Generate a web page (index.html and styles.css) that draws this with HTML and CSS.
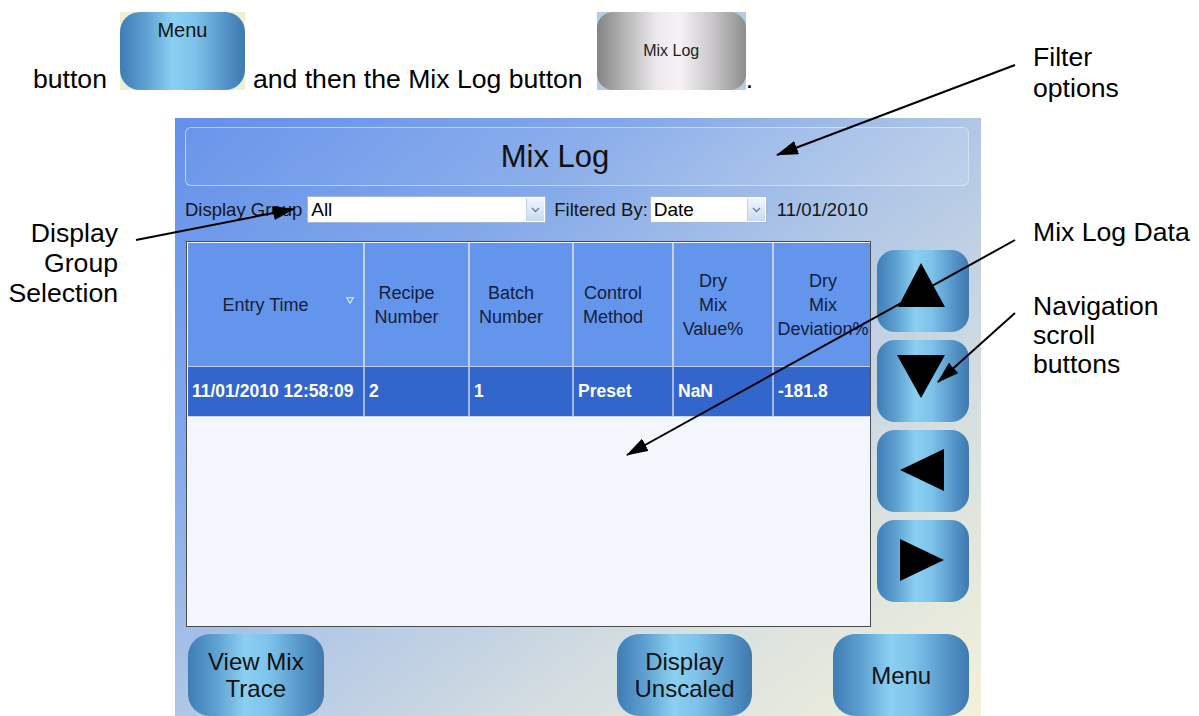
FILE: index.html
```html
<!DOCTYPE html>
<html>
<head>
<meta charset="utf-8">
<title>Mix Log</title>
<link rel="stylesheet" href="styles.css">
</head>
<body>
<div class="page">
  <p class="intro">
    <span class="txt">button</span>
    <span class="shot shot-menu"><span class="shot-menu-btn">Menu</span></span>
    <span class="txt txt-mid">and then the Mix Log button</span>
    <span class="shot shot-mixlog"><span class="shot-mixlog-btn">Mix Log</span></span>
    <span class="txt">.</span>
  </p>

  <div class="note note-left">Display<br>Group<br>Selection</div>

  <section class="panel">
    <div class="title">Mix Log</div>

    <div class="filters">
      <span class="label">Display Group</span>
      <div class="select select-group">
        <span class="value">All</span>
        <span class="drop"><svg width="9" height="6" viewBox="0 0 9 6"><path d="M1 1 L4.5 4.5 L8 1" fill="none" stroke="#6a7fa6" stroke-width="1.4"/></svg></span>
      </div>
      <span class="label label-filter">Filtered By:</span>
      <div class="select select-date">
        <span class="value">Date</span>
        <span class="drop"><svg width="9" height="6" viewBox="0 0 9 6"><path d="M1 1 L4.5 4.5 L8 1" fill="none" stroke="#6a7fa6" stroke-width="1.4"/></svg></span>
      </div>
      <span class="date">11/01/2010</span>
    </div>

    <div class="main">
      <div class="grid">
        <div class="row head">
          <div class="cell">Entry Time<svg class="sort" width="8" height="7" viewBox="0 0 8 7"><path d="M0.8 0.8 L7.2 0.8 L4 6.2 Z" fill="none" stroke="#e4ebf7" stroke-width="1.1"/></svg></div>
          <div class="cell">Recipe<br>Number</div>
          <div class="cell">Batch<br>Number</div>
          <div class="cell">Control<br>Method</div>
          <div class="cell">Dry<br>Mix<br>Value%</div>
          <div class="cell">Dry<br>Mix<br>Deviation%</div>
        </div>
        <div class="row data">
          <div class="cell">11/01/2010 12:58:09</div>
          <div class="cell">2</div>
          <div class="cell">1</div>
          <div class="cell">Preset</div>
          <div class="cell">NaN</div>
          <div class="cell">-181.8</div>
        </div>
      </div>

      <div class="nav">
        <div class="btn nav-btn"><svg width="92" height="82" viewBox="0 0 92 82"><polygon points="44,13 68,57 21,57"/></svg></div>
        <div class="btn nav-btn"><svg width="92" height="82" viewBox="0 0 92 82"><polygon points="20,15 68,15 44,58"/></svg></div>
        <div class="btn nav-btn"><svg width="92" height="82" viewBox="0 0 92 82"><polygon points="67,19 67,61 23,40"/></svg></div>
        <div class="btn nav-btn"><svg width="92" height="82" viewBox="0 0 92 82"><polygon points="23,19 23,61 67,40"/></svg></div>
      </div>
    </div>

    <div class="bottom">
      <div class="btn bbtn bbtn-trace">View Mix<br>Trace</div>
      <div class="btn bbtn bbtn-unscaled">Display<br>Unscaled</div>
      <div class="btn bbtn bbtn-menu">Menu</div>
    </div>
  </section>

  <div class="notes-right">
    <div class="note note-filter">Filter<br>options</div>
    <div class="note note-data">Mix Log Data</div>
    <div class="note note-nav">Navigation<br>scroll<br>buttons</div>
  </div>

  <svg class="arrows" width="1199" height="716" viewBox="0 0 1199 716">
    <defs>
      <marker id="ah" viewBox="0 0 22 14" refX="21" refY="7" markerWidth="22" markerHeight="14" markerUnits="userSpaceOnUse" orient="auto">
        <path d="M0 0 L22 7 L0 14 Z" fill="#000"/>
      </marker>
    </defs>
    <line x1="1015" y1="65" x2="777" y2="155" marker-end="url(#ah)"/>
    <line x1="136" y1="240" x2="294" y2="209" marker-end="url(#ah)"/>
    <line x1="1015" y1="240" x2="627" y2="455" marker-end="url(#ah)"/>
    <line x1="1015" y1="313" x2="938" y2="382" marker-end="url(#ah)"/>
  </svg>
</div>
</body>
</html>
```

FILE: styles.css
```css
* { box-sizing: border-box; }

html, body {
  margin: 0;
  padding: 0;
  background: #ffffff;
}

body {
  font-family: "Liberation Sans", Arial, sans-serif;
  color: #000;
}

.page {
  position: relative;
  width: 1199px;
  height: 716px;
  overflow: hidden;
  display: grid;
  grid-template-columns: 175px 806px 218px;
  grid-template-rows: 118px 598px;
}

/* ---------- intro line ---------- */
.intro {
  grid-column: 1 / 3;
  grid-row: 1;
  margin: 0;
  padding: 12px 0 0 33px;
  display: flex;
  align-items: flex-start;
}

.txt {
  margin-top: 52px;
  font-size: 26.6px;
  line-height: 30px;
  white-space: nowrap;
}

.txt-mid { margin-left: 8px; }

.shot {
  display: flex;
  width: 125px;
  height: 78px;
  flex: none;
}

.shot-menu {
  margin-left: 13px;
  background: #eeeed4;
}

.shot-menu-btn {
  flex: 1;
  border-radius: 20px;
  background: linear-gradient(to right, #3f7db5 0%, #5c9fd0 20%, #8bd0f2 42%, #7cc2ea 60%, #5292c6 85%, #4079ae 100%);
  text-align: center;
  font-size: 20px;
  line-height: 24px;
  padding-top: 6px;
  color: #111;
}

.shot-mixlog {
  margin-left: 14px;
  width: 149px;
  background: #b4cbe2;
}

.shot-mixlog-btn {
  flex: 1;
  border-radius: 16px;
  background: linear-gradient(to right, #848484 0%, #b4b4b4 18%, #ece9ec 40%, #f6f2f6 55%, #c8c6c8 78%, #8c8c8c 100%);
  display: flex;
  align-items: center;
  justify-content: center;
  font-size: 16px;
  color: #222;
}

/* ---------- annotations ---------- */
.note {
  font-size: 26.6px;
  line-height: 30px;
  white-space: nowrap;
}

.note-left {
  grid-column: 1;
  grid-row: 2;
  padding-top: 100px;
  padding-right: 57px;
  text-align: right;
}

.notes-right {
  grid-column: 3;
  grid-row: 1 / 3;
  padding-left: 52px;
}

.note-filter { margin-top: 42px; line-height: 31px; }
.note-data { margin-top: 113px; }
.note-nav { margin-top: 45px; line-height: 29px; }

.arrows {
  position: absolute;
  left: 0;
  top: 0;
  pointer-events: none;
}

.arrows line {
  stroke: #000;
  stroke-width: 2;
}

/* ---------- device panel ---------- */
.panel {
  grid-column: 2;
  grid-row: 2;
  overflow: hidden;
  padding: 9px 12px 0 10px;
  display: flex;
  flex-direction: column;
  background: linear-gradient(to bottom right, #6390ea 0%, #82a8ea 28%, #afc6e6 50%, #d4dde0 72%, #f3f1da 100%);
}

.title {
  height: 59px;
  flex: none;
  border: 1px solid rgba(232, 240, 246, 0.6);
  border-radius: 6px;
  background: linear-gradient(to right, rgba(255,255,255,0.04), rgba(255,255,255,0.12));
  display: flex;
  align-items: center;
  justify-content: center;
  padding-right: 44px;
  font-size: 31px;
  color: #111;
}

.filters {
  margin-top: 10px;
  height: 27px;
  flex: none;
  display: flex;
  align-items: center;
  font-size: 18.5px;
  color: #161616;
}

.label { margin-right: 5px; white-space: nowrap; }
.label-filter { margin-left: 8px; margin-right: 2px; }

.select {
  height: 27px;
  background: #fff;
  border: 1px solid #a6b9d8;
  display: flex;
  align-items: center;
  padding-left: 3px;
}

.select-group { width: 239px; }
.select-date { width: 117px; }

.select .value {
  flex: 1;
  font-size: 19px;
  color: #000;
}

.select .drop {
  width: 18px;
  height: 23px;
  margin-right: 1px;
  background: linear-gradient(to bottom, #f2f7ff, #c9daf3);
  border-left: 1px solid #c4d3ea;
  display: flex;
  align-items: center;
  justify-content: center;
}

.date { margin-left: 10px; }

.main {
  margin-top: 18px;
  display: flex;
  align-items: flex-start;
  flex: none;
}

.grid {
  margin-left: 1px;
  width: 685px;
  height: 386px;
  border: 1px solid #4b4b4b;
  padding: 1px;
  background: #f3f7fd;
  overflow: hidden;
}

.row {
  display: grid;
  grid-template-columns: 177px 105px 104px 100px 100px 120px;
  width: max-content;
}

.head {
  height: 124px;
  background: #6495ed;
  border-bottom: 1px solid #c3cde0;
}

.head .cell {
  position: relative;
  display: flex;
  align-items: center;
  justify-content: center;
  text-align: center;
  padding-right: 20px;
  border-right: 2px solid #c6d0e3;
  font-size: 18px;
  line-height: 24px;
  color: #14203a;
}

.sort {
  position: absolute;
  right: 9px;
  top: 54px;
}

.data {
  height: 50px;
  background: #3366cc;
  border-bottom: 1px solid #c9d5ec;
}

.data .cell {
  display: flex;
  align-items: center;
  padding-left: 4px;
  border-right: 2px solid #a2b6de;
  color: #fff;
  font-weight: bold;
  font-size: 17.5px;
  white-space: nowrap;
}

/* ---------- buttons ---------- */
.btn {
  background: linear-gradient(to right, #3f7db5 0%, #5c9fd0 20%, #8bd0f2 42%, #7cc2ea 60%, #5292c6 85%, #4079ae 100%);
  color: #111;
}

.nav {
  margin-left: 6px;
  padding-top: 9px;
  display: flex;
  flex-direction: column;
  gap: 8px;
}

.nav-btn {
  width: 92px;
  height: 82px;
  border-radius: 18px;
}

.nav-btn svg { display: block; }
.nav-btn polygon { fill: #000; }

.bottom {
  margin-top: 7px;
  display: flex;
  flex: none;
}

.bbtn {
  width: 136px;
  height: 82px;
  border-radius: 22px;
  display: flex;
  align-items: center;
  justify-content: center;
  text-align: center;
  font-size: 24px;
  line-height: 27px;
}

.bbtn-trace { margin-left: 3px; }
.bbtn-unscaled { margin-left: 293px; }
.bbtn-menu { margin-left: 81px; }
```
